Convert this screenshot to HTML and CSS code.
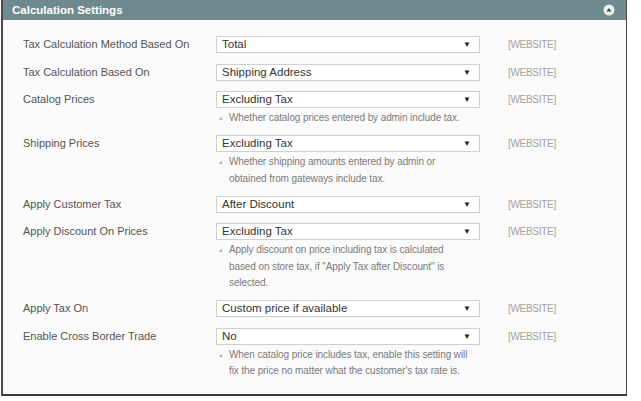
FILE: index.html
```html
<!DOCTYPE html>
<html lang="en">
<head>
    <meta charset="UTF-8">
    <title>Calculation Settings</title>
    <link rel="stylesheet" href="styles.css">
</head>
<body>
    <!-- Settings panel -->
    <div class="panel">
        <div class="panel-head">
            <span class="panel-title">Calculation Settings</span>
            <span class="collapse-btn">
                <svg width="12" height="12" viewBox="0 0 12 12">
                    <circle cx="6" cy="6" r="5.5" fill="#e9eeee"/>
                    <path d="M3.5 7.5 L6 4 L8.5 7.5 Z" fill="#33474a"/>
                </svg>
            </span>
        </div>

        <div class="panel-body">
            <div class="row">
                <label class="row-label">Tax Calculation Method Based On</label>
                <div class="row-field">
                    <div class="select">Total<span class="arrow">&#9660;</span></div>
                </div>
                <span class="scope">[WEBSITE]</span>
            </div>

            <div class="row">
                <label class="row-label">Tax Calculation Based On</label>
                <div class="row-field">
                    <div class="select">Shipping Address<span class="arrow">&#9660;</span></div>
                </div>
                <span class="scope">[WEBSITE]</span>
            </div>

            <div class="row">
                <label class="row-label">Catalog Prices</label>
                <div class="row-field">
                    <div class="select">Excluding Tax<span class="arrow">&#9660;</span></div>
                    <p class="note">Whether catalog prices entered by admin include tax.</p>
                </div>
                <span class="scope">[WEBSITE]</span>
            </div>

            <div class="row">
                <label class="row-label">Shipping Prices</label>
                <div class="row-field">
                    <div class="select">Excluding Tax<span class="arrow">&#9660;</span></div>
                    <p class="note">Whether shipping amounts entered by admin or<br>obtained from gateways include tax.</p>
                </div>
                <span class="scope">[WEBSITE]</span>
            </div>

            <div class="row">
                <label class="row-label">Apply Customer Tax</label>
                <div class="row-field">
                    <div class="select">After Discount<span class="arrow">&#9660;</span></div>
                </div>
                <span class="scope">[WEBSITE]</span>
            </div>

            <div class="row">
                <label class="row-label">Apply Discount On Prices</label>
                <div class="row-field">
                    <div class="select">Excluding Tax<span class="arrow">&#9660;</span></div>
                    <p class="note">Apply discount on price including tax is calculated<br>based on store tax, if "Apply Tax after Discount" is<br>selected.</p>
                </div>
                <span class="scope">[WEBSITE]</span>
            </div>

            <div class="row">
                <label class="row-label">Apply Tax On</label>
                <div class="row-field">
                    <div class="select">Custom price if available<span class="arrow">&#9660;</span></div>
                </div>
                <span class="scope">[WEBSITE]</span>
            </div>

            <div class="row">
                <label class="row-label">Enable Cross Border Trade</label>
                <div class="row-field">
                    <div class="select">No<span class="arrow">&#9660;</span></div>
                    <p class="note">When catalog price includes tax, enable this setting will<br>fix the price no matter what the customer's tax rate is.</p>
                </div>
                <span class="scope">[WEBSITE]</span>
            </div>
        </div>
    </div>
</body>
</html>
```

FILE: styles.css
```css
/* General */
body {
    margin: 0;
    background-color: #ffffff;
    font-family: "Liberation Sans", Arial, sans-serif;
}

/* Panel */
.panel {
    width: 623px;
    height: 394px;
    margin-left: 1px;
    background-color: #fafafa;
    border-left: 2px solid #4a4a4a;
    border-right: 1px solid #4a4a4a;
    border-bottom: 2px solid #3a3a3a;
}
.panel-head {
    height: 20px;
    background-color: #6f8a8e;
    display: flex;
    align-items: center;
    justify-content: space-between;
    padding: 0 11px 0 9px;
}
.panel-title {
    color: #ffffff;
    font-size: 11.5px;
    font-weight: bold;
}
.collapse-btn {
    display: flex;
}

/* Rows */
.panel-body {
    padding: 16px 0 0 20px;
}
.row {
    display: grid;
    grid-template-columns: 193px 264px auto;
    align-items: start;
    margin-bottom: 10.5px;
}
.row-label {
    font-size: 11px;
    color: #555555;
    line-height: 17px;
}
.select {
    position: relative;
    height: 17px;
    box-sizing: border-box;
    border: 1px solid #cfcfcf;
    background-color: #ffffff;
    font-size: 11.5px;
    color: #333333;
    line-height: 15px;
    padding-left: 5px;
}
.arrow {
    position: absolute;
    right: 8px;
    top: 0;
    font-size: 8px;
    color: #222222;
}
.note {
    margin: 2px 0 -2px;
    padding: 0 6px 0 13px;
    position: relative;
    font-size: 10px;
    color: #7a7a7a;
    line-height: 16.5px;
    letter-spacing: -0.1px;
}
.note::before {
    content: "\25B2";
    position: absolute;
    left: 2px;
    top: 0;
    font-size: 6px;
    color: #b5b5b5;
}
.scope {
    margin-left: 28px;
    font-size: 10px;
    color: #a3a3a3;
    line-height: 17px;
    letter-spacing: -0.3px;
}
```
